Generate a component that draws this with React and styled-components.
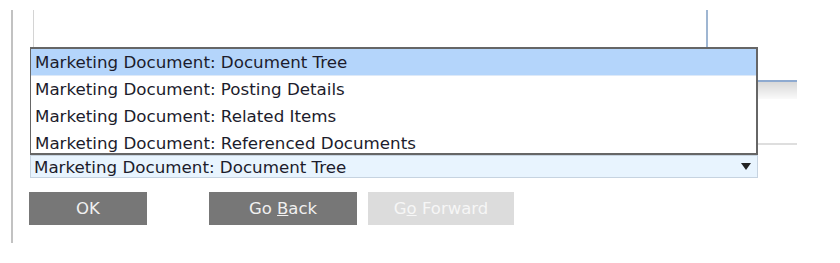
import styled, { createGlobalStyle } from "styled-components";

const GlobalStyle = createGlobalStyle`
    body {
        margin: 0;
        background: #fff;
        font-family: "DejaVu Sans", "Liberation Sans", sans-serif;
    }
`;

const Page = styled.div`
    position: relative;
    width: 840px;
    height: 263px;
    padding: 10px 0 0 11px;
    box-sizing: border-box;
`;

const Panel = styled.div`
    border-left: 2px solid #c2c2c2;
    height: 233px;
    display: flex;
    flex-direction: column;
`;

const TopArea = styled.div`
    margin-left: 20px;
    width: 672px;
    height: 70px;
    border-left: 1px solid #d4d4d4;
    border-right: 2px solid #9fb6d2;
    flex: none;
`;

const HeaderBar = styled.div`
    margin-left: 20px;
    width: 764px;
    height: 17px;
    border-top: 2px solid #8eaad0;
    background: linear-gradient(#d8d8d8, #fafafa);
    flex: none;
`;

const Separator = styled.div`
    margin-left: 20px;
    width: 764px;
    height: 44px;
    border-bottom: 2px solid #dedede;
    flex: none;
`;

const Combo = styled.div`
    margin: 10px 0 0 17px;
    width: 728px;
    height: 23px;
    box-sizing: border-box;
    background: #e8f4fe;
    border: 1px solid #c6d3e0;
    display: flex;
    align-items: center;
    justify-content: space-between;
    padding: 0 4px 0 3px;
    font-size: 16.7px;
    color: #1c1c2c;
`;

const Arrow = styled.span`
    width: 0;
    height: 0;
    border-left: 5px solid transparent;
    border-right: 5px solid transparent;
    border-top: 7px solid #222;
    margin-right: 2px;
`;

const ButtonRow = styled.div`
    margin: 14px 0 0 16px;
    display: flex;
`;

const Button = styled.button`
    height: 33px;
    width: ${props => props.w}px;
    margin-left: ${props => props.gap}px;
    border: none;
    padding: 0;
    background: ${props => props.disabled ? "#dcdcdc" : "#777777"};
    color: ${props => props.disabled ? "#f6f6f6" : "#f0f0f0"};
    font-family: "DejaVu Sans", "Liberation Sans", sans-serif;
    font-size: 16.5px;
    u { text-decoration-thickness: 1px; }
`;

const Popup = styled.div`
    position: absolute;
    top: 47px;
    left: 30px;
    width: 728px;
    height: 108px;
    box-sizing: border-box;
    border: 2px solid #666;
    border-left-width: 1px;
    background: #fff;
    overflow: hidden;
`;

const Option = styled.div`
    height: 27px;
    line-height: 27px;
    padding-left: 4px;
    font-size: 16.7px;
    color: #1c1c2c;
    white-space: nowrap;
    background: ${props => props.selected ? "#b4d5fb" : "#fff"};
    border-bottom: ${props => props.selected ? "1px solid #dde9f8" : "none"};
    box-sizing: border-box;
`;

const options = [
    "Marketing Document: Document Tree",
    "Marketing Document: Posting Details",
    "Marketing Document: Related Items",
    "Marketing Document: Referenced Documents",
];

function App() {
    return (
        <Page>
            <GlobalStyle />
            <Panel>
                <TopArea />
                <HeaderBar />
                <Separator />
                <Combo>
                    <span>Marketing Document: Document Tree</span>
                    <Arrow />
                </Combo>
                <ButtonRow>
                    <Button w={118} gap={0}>OK</Button>
                    <Button w={148} gap={62}>Go <u>B</u>ack</Button>
                    <Button w={146} gap={11} disabled>G<u>o</u> Forward</Button>
                </ButtonRow>
            </Panel>
            <Popup>
                {options.map((o, i) => (
                    <Option key={o} selected={i === 0}>{o}</Option>
                ))}
            </Popup>
        </Page>
    );
}

export default App;
